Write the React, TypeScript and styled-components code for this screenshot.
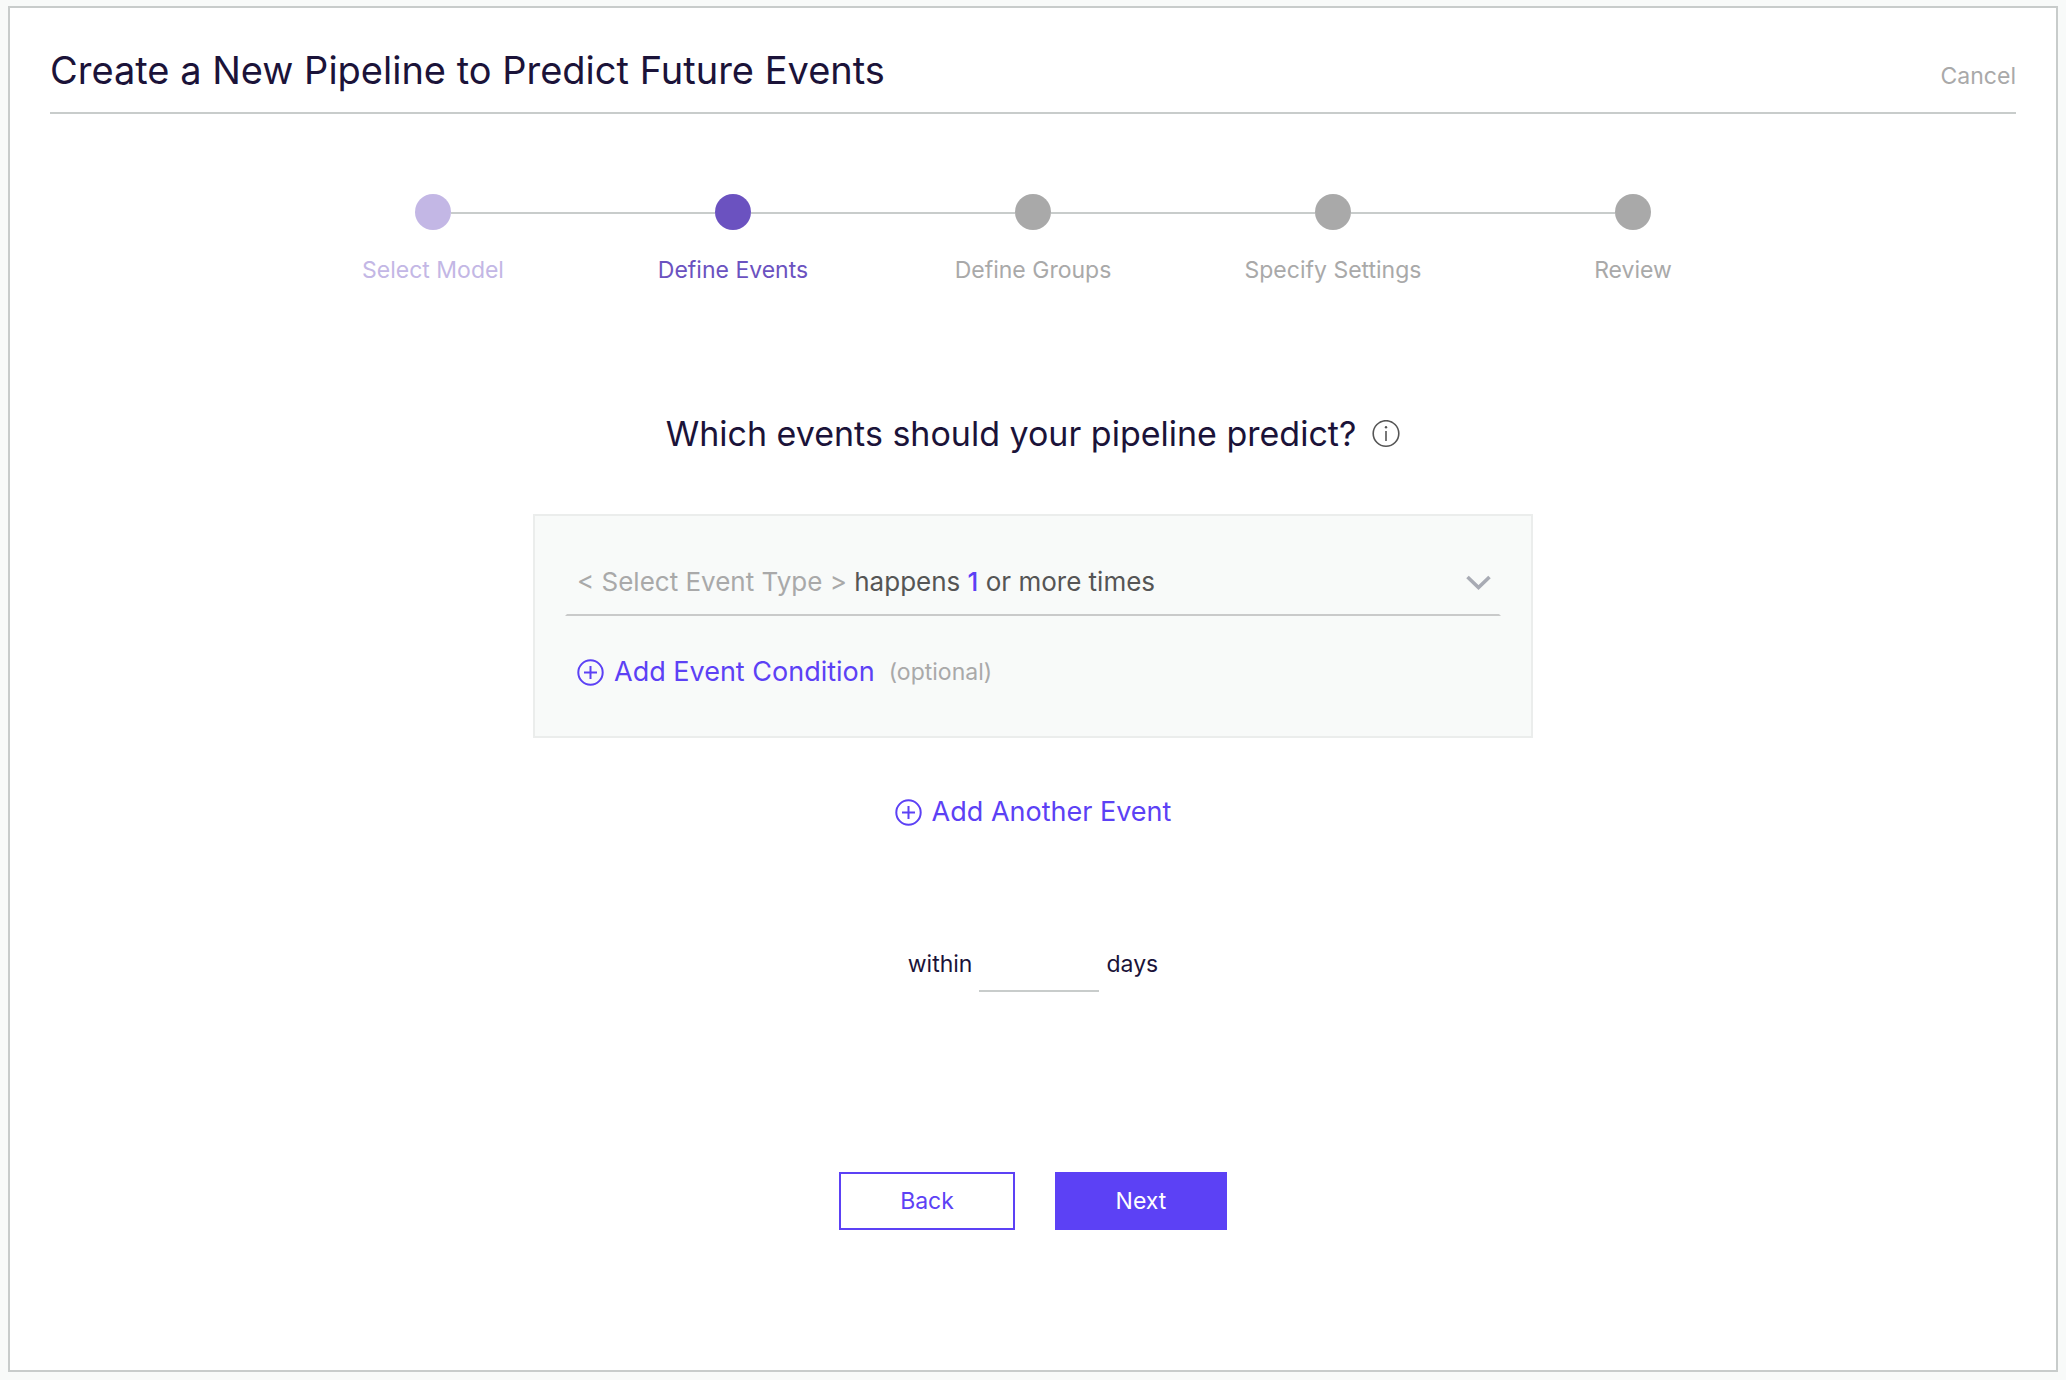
import React from "react";
import styled, { createGlobalStyle } from "styled-components";

const color = {
  page: "#f8faf9",
  line: "#c8cccb",
  ink: "#1b1339",
  muted: "#a9a9a9",
  body: "#555555",
  accent: "#5c41f5",
  step: "#6b52c0",
  stepDone: "#c3b7e5",
};

const GlobalStyle = createGlobalStyle`
  *, *::before, *::after { box-sizing: border-box; }
  body {
    margin: 0;
    background: ${color.page};
    color: ${color.ink};
    font-family: Inter, "Liberation Sans", sans-serif;
    font-size: 23px;
    line-height: 32px;
  }
  button, input { font: inherit; }
  button { cursor: pointer; }
`;

const Page = styled.div`
  display: flex;
  min-height: 100vh;
  padding: 6px 8px 8px;
`;

const Panel = styled.main`
  flex: 1;
  padding: 38px 40px 80px;
  background: #ffffff;
  border: 2px solid ${color.line};
`;

const Header = styled.header`
  display: flex;
  align-items: baseline;
  justify-content: space-between;
  padding-bottom: 18px;
  border-bottom: 2px solid ${color.line};
`;

const Title = styled.h1`
  margin: 0;
  font-size: 38px;
  font-weight: 400;
  line-height: 48px;
`;

const TextButton = styled.button`
  padding: 0;
  border: 0;
  background: none;
  color: ${color.muted};
`;

const Steps = styled.ol`
  display: grid;
  grid-template-columns: repeat(5, 1fr);
  max-width: 1500px;
  margin: 80px auto 0;
  padding: 0;
  list-style: none;
`;

type StepState = "done" | "current" | "next";

const stepColor: Record<StepState, string> = {
  done: color.stepDone,
  current: color.step,
  next: color.muted,
};

const Step = styled.li<{ $state: StepState }>`
  display: flex;
  flex-direction: column;
  gap: 24px;
  color: ${(p) => stepColor[p.$state]};
  text-align: center;
`;

const Track = styled.div`
  display: flex;
  align-items: center;
`;

const Connector = styled.span<{ $hidden: boolean }>`
  flex: 1;
  height: 2px;
  margin-top: 2px;
  background: ${(p) => (p.$hidden ? "transparent" : color.line)};
`;

const Dot = styled.span`
  width: 36px;
  height: 36px;
  border-radius: 50%;
  background: currentColor;
`;

const Form = styled.form`
  display: flex;
  flex-direction: column;
  align-items: center;
  margin-top: 124px;
`;

const Question = styled.div`
  display: flex;
  align-items: center;
  gap: 16px;
`;

const QuestionText = styled.h2`
  margin: 0;
  font-size: 34px;
  font-weight: 400;
  line-height: 48px;
`;

const InfoButton = styled.button`
  display: flex;
  padding: 0;
  border: 0;
  background: none;
  color: ${color.body};
`;

const EventCard = styled.section`
  width: 100%;
  max-width: 1000px;
  margin-top: 56px;
  padding: 50px 30px 48px;
  background: ${color.page};
  border: 2px solid #ebedec;
`;

const EventSelect = styled.button`
  display: flex;
  align-items: center;
  justify-content: space-between;
  width: 100%;
  padding: 0 8px 16px 10px;
  border: 2px solid transparent;
  border-top: 0;
  border-bottom-color: #c9caca;
  background: none;
  color: ${color.body};
  font-size: 26px;
  text-align: left;
`;

const Placeholder = styled.span`
  color: ${color.muted};
`;

const Count = styled.span`
  color: ${color.accent};
  font-weight: 500;
`;

const ConditionRow = styled.div`
  display: flex;
  align-items: center;
  gap: 14px;
  margin-top: 40px;
  padding-left: 12px;
`;

const AddButton = styled.button`
  display: flex;
  align-items: center;
  gap: 10px;
  padding: 0;
  border: 0;
  background: none;
  color: ${color.accent};
  font-size: 27px;
`;

const Optional = styled.span`
  color: ${color.muted};
`;

const AddEvent = styled.div`
  margin-top: 58px;
`;

const Window = styled.div`
  display: flex;
  align-items: baseline;
  gap: 7px;
  margin-top: 120px;
`;

const DaysInput = styled.input`
  width: 120px;
  height: 44px;
  padding: 0 0 10px;
  border: 0;
  border-bottom: 2px solid ${color.line};
  border-radius: 0;
  background: none;
  color: inherit;
  text-align: center;
  outline: none;
`;

const Actions = styled.div`
  display: flex;
  gap: 40px;
  margin-top: 180px;
`;

const ActionButton = styled.button<{ $primary?: boolean }>`
  width: ${(p) => (p.$primary ? 172 : 176)}px;
  height: 58px;
  padding: 0;
  border: 2px solid ${color.accent};
  background: ${(p) => (p.$primary ? color.accent : "#ffffff")};
  color: ${(p) => (p.$primary ? "#ffffff" : color.accent)};
`;

const PlusCircle = () => (
  <svg width="27" height="27" viewBox="0 0 27 27" fill="none" stroke="currentColor" strokeWidth="2" aria-hidden="true">
    <circle cx="13.5" cy="13.5" r="12.2" />
    <path d="M13.5 7v13M7 13.5h13" />
  </svg>
);

const InfoCircle = () => (
  <svg width="28" height="28" viewBox="0 0 28 28" fill="none" stroke="currentColor" strokeWidth="1.6" aria-hidden="true">
    <circle cx="14" cy="13.5" r="12.8" />
    <path d="M14 11v10" />
    <circle cx="14" cy="7.3" r="1.2" fill="currentColor" stroke="none" />
  </svg>
);

const Chevron = () => (
  <svg width="26" height="16" viewBox="0 0 26 16" fill="none" stroke="#a8abb4" strokeWidth="3.6" aria-hidden="true">
    <path d="M2.500 3L13.500 13.500L24.500 3" />
  </svg>
);

const steps: { label: string; state: StepState }[] = [
  { label: "Select Model", state: "done" },
  { label: "Define Events", state: "current" },
  { label: "Define Groups", state: "next" },
  { label: "Specify Settings", state: "next" },
  { label: "Review", state: "next" },
];

export default function App() {
  return (
    <Page>
      <GlobalStyle />
      <Panel>
        <Header>
          <Title>Create a New Pipeline to Predict Future Events</Title>
          <TextButton type="button">Cancel</TextButton>
        </Header>

        <Steps>
          {steps.map((step, i) => (
            <Step key={step.label} $state={step.state} aria-current={step.state === "current" ? "step" : undefined}>
              <Track>
                <Connector $hidden={i === 0} />
                <Dot />
                <Connector $hidden={i === steps.length - 1} />
              </Track>
              <span>{step.label}</span>
            </Step>
          ))}
        </Steps>

        <Form onSubmit={(e) => e.preventDefault()}>
          <Question>
            <QuestionText>Which events should your pipeline predict?</QuestionText>
            <InfoButton type="button" aria-label="More information">
              <InfoCircle />
            </InfoButton>
          </Question>

          <EventCard>
            <EventSelect type="button" aria-haspopup="listbox">
              <span>
                <Placeholder>&lt; Select Event Type &gt;</Placeholder> happens <Count>1</Count> or more times
              </span>
              <Chevron />
            </EventSelect>
            <ConditionRow>
              <AddButton type="button">
                <PlusCircle />
                Add Event Condition
              </AddButton>
              <Optional>(optional)</Optional>
            </ConditionRow>
          </EventCard>

          <AddEvent>
            <AddButton type="button">
              <PlusCircle />
              Add Another Event
            </AddButton>
          </AddEvent>

          <Window>
            <label htmlFor="days">within</label>
            <DaysInput id="days" type="text" inputMode="numeric" aria-describedby="days-unit" />
            <span id="days-unit">days</span>
          </Window>

          <Actions>
            <ActionButton type="button">Back</ActionButton>
            <ActionButton type="submit" $primary>
              Next
            </ActionButton>
          </Actions>
        </Form>
      </Panel>
    </Page>
  );
}
